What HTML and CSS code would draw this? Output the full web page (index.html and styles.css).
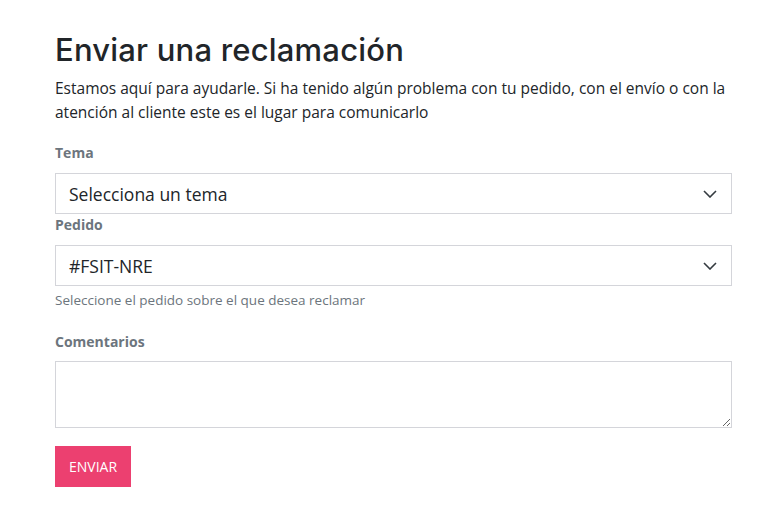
FILE: index.html
```html
<!DOCTYPE html>
<html lang="es">
    <head>
        <meta charset="utf-8" />
        <title>Enviar una reclamación</title>
        <link rel="stylesheet" href="styles.css">
    </head>
    <body>
        <div class="claim">
            <h1>Enviar una reclamación</h1>
            <p class="intro">Estamos aquí para ayudarle. Si ha tenido algún problema con tu pedido, con el envío o con la atención al cliente este es el lugar para comunicarlo</p>
            <form class="claim-form">
                <div class="field">
                    <label for="tema">Tema</label>
                    <div class="select">
                        <span>Selecciona un tema</span>
                        <svg width="14" height="8" viewBox="0 0 14 8"><path d="M1 1l6 6 6-6" fill="none" stroke="#343a40" stroke-width="1.6"/></svg>
                    </div>
                </div>
                <div class="field">
                    <label for="pedido">Pedido</label>
                    <div class="select">
                        <span>#FSIT-NRE</span>
                        <svg width="14" height="8" viewBox="0 0 14 8"><path d="M1 1l6 6 6-6" fill="none" stroke="#343a40" stroke-width="1.6"/></svg>
                    </div>
                    <small class="help">Seleccione el pedido sobre el que desea reclamar</small>
                </div>
                <div class="field spaced">
                    <label for="comentarios">Comentarios</label>
                    <textarea id="comentarios"></textarea>
                </div>
                <button type="submit" class="btn">ENVIAR</button>
            </form>
        </div>
    </body>
</html>
```

FILE: styles.css
```css
body {
    margin:         0;
    background:     #ffffff;
    color:          #212529;
    font-family:    "Open Sans", "Liberation Sans", sans-serif;
}
.claim {
    width:          677px;
    padding:        28px 0 0 55px;
}
h1 {
    margin:         0;
    font-family:    "Inter", "Noto Sans", sans-serif;
    font-weight:    500;
    font-size:      31px;
    line-height:    44px;
    letter-spacing: 0.2px;
    color:          #212529;
}
p.intro {
    margin:         4px 0 19px 0;
    font-size:      15.5px;
    line-height:    24px;
}
.field {
    display:        flex;
    flex-direction: column;
}
.field.spaced {
    margin-top:     22px;
}
.field label {
    font-size:      14px;
    font-weight:    700;
    color:          #6c757d;
    line-height:    20px;
    margin-bottom:  10px;
}
.field.spaced label {
    margin-bottom:  9px;
}
.select {
    display:        flex;
    align-items:    center;
    justify-content: space-between;
    height:         41px;
    box-sizing:     border-box;
    border:         1px solid #d4d5da;
    padding:        0 14px 0 13px;
    font-size:      17.5px;
    margin-bottom:  1px;
}
.help {
    font-size:      13.5px;
    color:          #6c757d;
    line-height:    20px;
    margin-top:     3px;
}
textarea {
    height:         67px;
    box-sizing:     border-box;
    border:         1px solid #d4d5da;
    resize:         vertical;
    margin:         0;
}
.btn {
    margin-top:     18px;
    background:     #ec4070;
    color:          #ffffff;
    border:         none;
    height:         41px;
    padding:        0 14px;
    font-family:    "Open Sans", sans-serif;
    font-size:      14px;
}
```
